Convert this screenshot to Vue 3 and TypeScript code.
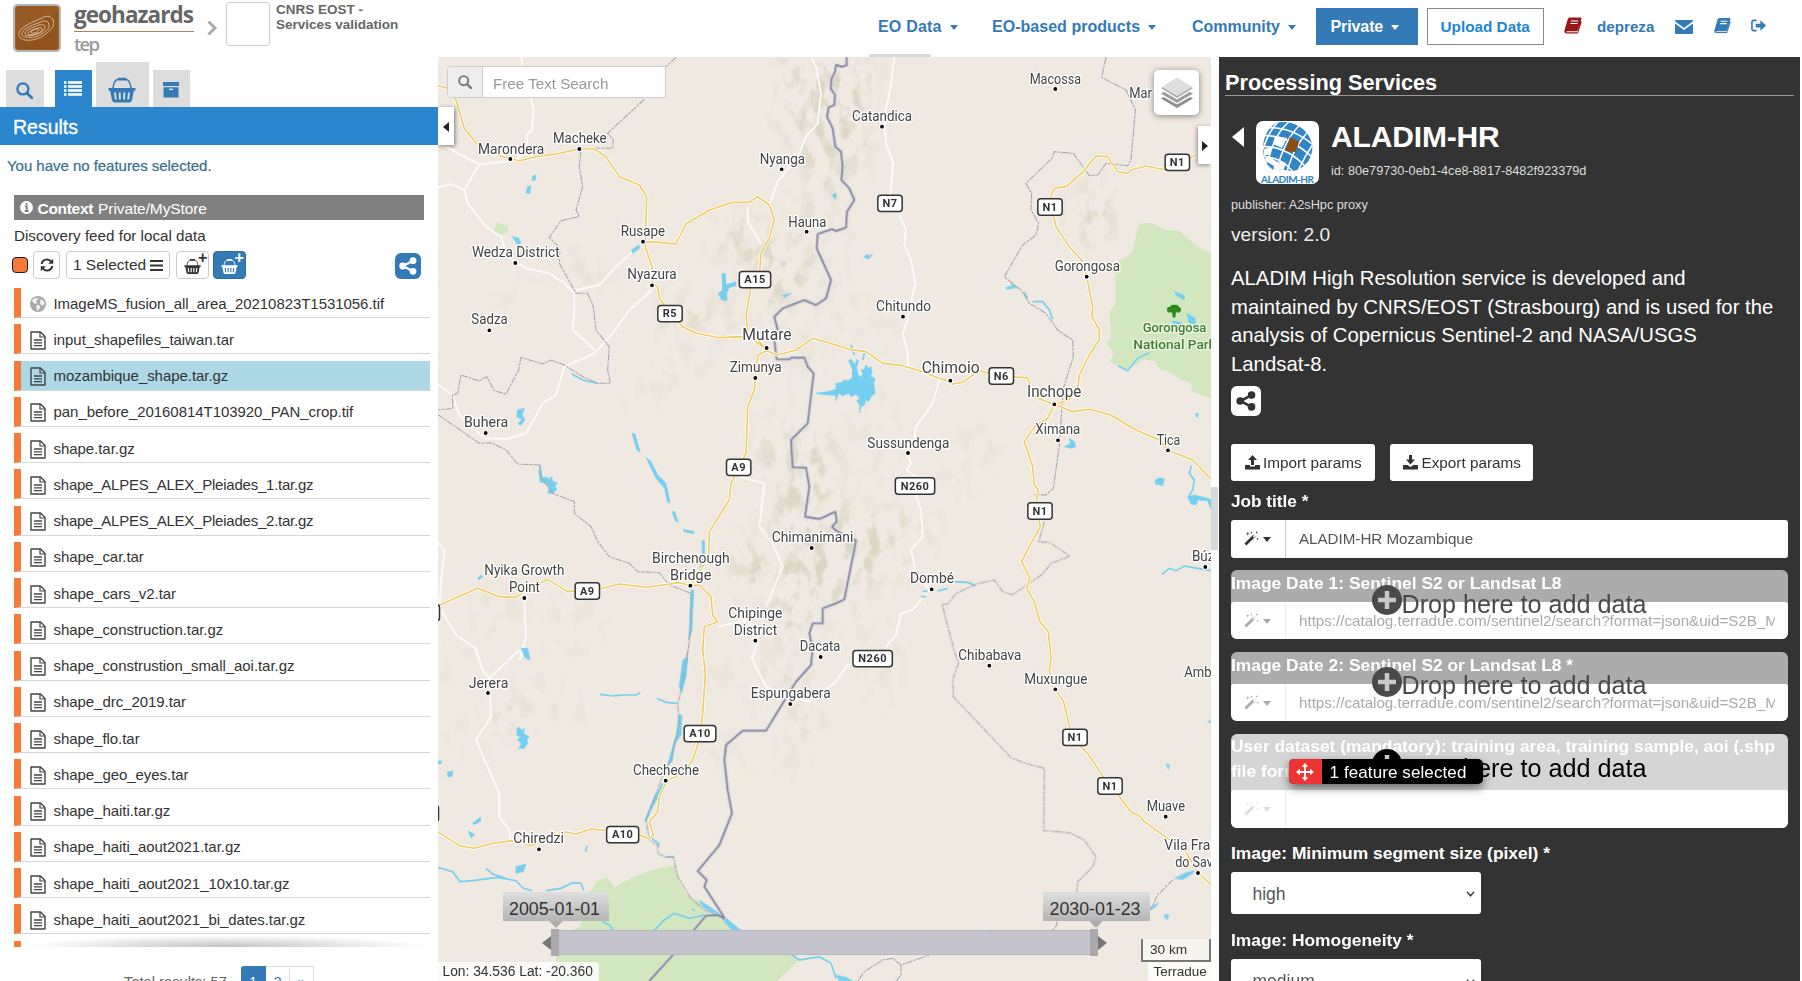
<script setup lang="ts">
type Tile = 'A' | 'B' | 'C' | 'D' | 'E' | 'F'
interface Shape { t: Tile; d: string }
interface Label { t: Tile; s: string; x: number; y: number; w: number; big?: boolean; park?: boolean }
interface Shield { t: Tile; s: string; x: number; y: number; w: number }

// Each map tile has its own origin; tile units are thirds of a pixel.
const origins: Record<Tile, [number, number]> = {
  A: [436, 0], B: [836, 0], C: [436, 330], D: [836, 330], E: [436, 650], F: [836, 650],
}
const place = (t: Tile) => `translate(${origins[t][0]} ${origins[t][1]}) scale(0.33333)`

const files: string[] = [
  'ImageMS_fusion_all_area_20210823T1531056.tif', 'input_shapefiles_taiwan.tar', 'mozambique_shape.tar.gz',
  'pan_before_20160814T103920_PAN_crop.tif', 'shape.tar.gz', 'shape_ALPES_ALEX_Pleiades_1.tar.gz',
  'shape_ALPES_ALEX_Pleiades_2.tar.gz', 'shape_car.tar', 'shape_cars_v2.tar', 'shape_construction.tar.gz',
  'shape_construstion_small_aoi.tar.gz', 'shape_drc_2019.tar', 'shape_flo.tar', 'shape_geo_eyes.tar',
  'shape_haiti.tar.gz', 'shape_haiti_aout2021.tar.gz', 'shape_haiti_aout2021_10x10.tar.gz',
  'shape_haiti_aout2021_bi_dates.tar.gz',
]

const parks: Shape[] = [
  { t: 'B', d: 'M1125 758 L1100 750 L1060 720 L1030 692 L985 690 L945 668 L915 670 L905 685 L887 760 L838 790 L838 910 L820 940 L825 1010 L812 1030 L832 1058 L822 1085 L870 1112 L925 1078 L960 1085 L972 1108 L1000 1115 L1035 1140 L1065 1150 L1068 1175 L1125 1195 Z' },
  { t: 'A', d: 'M172 695 L184 665 L213 678 L218 694 L195 704 Z' },
  { t: 'E', d: 'M390 845 L430 832 L450 790 L465 720 L480 695 L512 682 L538 712 L570 692 L640 662 L718 645 L735 710 L765 745 L790 750 L805 780 L860 800 L885 830 L910 848 L1065 910 L1085 933 L1025 993 L360 993 L360 910 Z' },
]
const hills: Shape[] = [
  { t: 'A', d: 'M1030 172 L1200 172 L1200 560 L1180 620 L1120 680 L1080 660 L1110 600 L1130 560 L1100 500 L1060 420 L1040 300 Z M1000 640 L1060 690 L1110 720 L1160 800 L1120 880 L1040 900 L1000 960 L930 800 L970 720 Z M830 700 L930 650 L980 720 L940 800 L860 760 Z M390 790 L450 750 L500 870 L450 850 Z M240 870 L275 850 L255 900 L220 900 Z M640 910 L880 930 L920 990 L700 990 Z' },
  { t: 'B', d: 'M0 172 L90 172 L115 300 L80 480 L50 560 L0 440 Z M760 540 L815 560 L845 640 L820 700 L780 740 L720 710 L690 630 L730 620 Z M0 800 L40 900 L30 980 L0 960 Z M0 690 L30 740 L0 760 Z M120 940 L160 930 L150 1000 Z' },
  { t: 'C', d: 'M1040 20 L1160 40 L1160 90 L1060 90 Z M980 180 L1060 200 L1050 230 Z M1120 300 L1200 330 L1200 560 L1120 540 L1070 400 Z M960 320 L1060 300 L1070 400 L970 440 Z M1020 440 L1110 430 L1120 560 L1200 580 L1200 820 L1120 850 L1080 960 L960 900 L1000 780 L880 770 L900 650 L1000 620 Z M620 140 L820 60 L780 100 L640 170 Z M120 820 L250 800 L180 890 L130 860 Z M300 850 L480 880 L440 930 L320 890 Z M590 200 L640 230 L600 250 Z' },
  { t: 'D', d: 'M100 0 L140 0 L120 50 Z M100 170 L150 260 L130 420 L90 450 L80 410 L120 340 L95 250 Z M410 330 L480 310 L430 400 L340 500 L320 530 Z M0 490 L60 560 L120 550 L200 560 L300 600 L200 700 L60 780 L0 900 Z M130 870 L160 910 L150 1120 L130 1100 L120 960 Z M240 290 L275 275 L260 300 Z' },
  { t: 'E', d: 'M1000 60 L1100 80 L1160 250 L1070 330 L960 420 L1030 350 L1110 230 L1090 150 L1030 170 L930 130 Z M810 20 L900 60 L820 90 Z M770 270 L900 310 L850 340 Z M10 60 L80 0 L60 60 Z M120 220 L200 150 L300 160 L200 240 Z M20 320 L90 270 L100 310 Z M230 100 L430 180 L360 200 Z' },
]
const waters: Shape[] = [
  { t: 'A', d: 'M290 528 L300 525 L298 540 L288 542 Z M275 560 L285 557 L281 582 L270 578 Z M229 710 L248 714 L255 730 L244 733 Z M587 750 L608 735 L611 745 L590 760 Z M858 820 L868 822 L870 855 L900 845 L898 858 L880 862 L872 880 L873 902 L858 900 L846 880 L860 870 Z M1040 886 L1065 880 L1045 893 Z M1187 585 L1200 580 L1200 597 Z' },
  { t: 'B', d: 'M83 772 L95 763 L100 768 L110 762 L98 777 Z M1016 874 L1046 888 L1044 899 L1020 886 Z M1052 940 L1078 955 L1078 972 L1060 968 Z M1010 962 L1040 970 L1030 990 L1010 975 Z M510 862 L530 858 L535 865 L512 868 Z' },
  { t: 'C', d: 'M588 310 L597 312 L612 365 L603 360 Z M630 382 L645 395 L665 435 L690 460 L702 518 L694 515 L686 475 L660 445 Z M708 545 L716 545 L727 577 L718 572 Z M742 598 L775 605 L773 611 L745 605 Z M798 632 L805 632 L806 675 L799 672 Z M765 780 L773 780 L768 900 L758 930 Z M308 420 L320 445 L332 440 L338 450 L345 440 L352 455 L363 458 L357 470 L363 478 L350 490 L335 490 L340 475 L334 462 L312 455 Z M245 240 L265 235 L258 255 L267 268 L256 285 L246 282 L258 268 L242 260 Z M125 747 L135 735 L140 741 L130 748 Z M256 955 L275 955 L282 990 L268 985 Z M1140 190 L1175 185 L1200 178 L1200 196 L1165 194 Z' },
  { t: 'D', d: 'M0 160 L20 157 L22 150 L35 152 L48 145 L50 120 L38 92 L45 88 L58 105 L62 88 L68 92 L62 112 L66 135 L74 140 L72 155 L80 130 L75 118 L84 120 L90 105 L98 115 L105 110 L108 125 L104 140 L117 145 L113 160 L117 190 L105 200 L98 215 L90 208 L85 225 L76 230 L70 248 L72 225 L62 212 L72 205 L60 193 L46 200 L38 190 L20 197 L8 190 L0 212 Z M685 350 L703 342 L700 325 L715 335 L720 350 L705 355 Z M958 450 L970 443 L985 447 L980 467 L958 462 Z M1077 252 L1087 250 L1085 264 Z M1055 500 L1075 495 L1095 500 L1125 508 L1125 538 L1115 512 L1085 510 L1080 525 L1065 522 Z' },
  { t: 'E', d: 'M740 30 L756 20 L750 80 L737 128 L730 110 Z M728 195 L738 195 L735 255 L718 280 L708 335 L695 345 L710 290 L722 250 Z M243 235 L250 232 L256 242 L265 235 L262 250 L280 262 L272 268 L275 280 L265 295 L248 295 L256 282 L244 268 L254 262 L242 255 Z M240 650 L270 642 L262 665 L240 670 Z M110 520 L133 502 L135 512 L115 524 Z M97 543 L115 553 L105 565 Z M5 333 L18 333 L15 341 L5 341 Z M34 366 L50 364 L48 380 L36 380 Z M790 750 L865 800 L920 845 L895 848 L860 808 L800 770 Z M680 400 L685 412 L650 470 L630 515 L626 512 L655 440 Z' },
  { t: 'F', d: 'M990 342 L1000 344 L998 358 Z M986 793 L998 795 L995 808 L986 804 Z M1015 685 L1050 668 L1075 662 L1070 670 L1040 688 Z M940 775 L968 757 L960 770 L940 782 Z M445 845 L460 840 L475 847 Z M1115 213 L1126 213 L1126 220 Z M0 975 L30 982 L50 993 L10 993 Z' },
]
const rivers: Shape[] = [
  { t: 'B', d: 'M525 852 L545 865 M563 875 L575 895 M590 905 L620 905 L640 930 L650 958' },
  { t: 'C', d: 'M407 132 L440 150 L485 160 M312 405 L318 450 M790 720 L803 675' },
  { t: 'D', d: 'M846 107 L875 122 L905 85 L940 68 M355 755 L400 758 L418 768 M255 800 L270 800 M260 783 L275 785 M305 783 L335 775 M978 733 L1000 715 L1020 722 L1045 708 L1085 715 L1125 722 M1066 407 L1060 430 L1075 450 L1070 480 L1058 500 M45 45 L55 75 M88 62 L80 90' },
  { t: 'E', d: 'M492 133 L530 138 L560 135 L600 135 L613 128 M663 145 L690 157 L725 160 M5 652 L50 665 L72 695 L110 692 L185 682 L240 692 L262 715 L288 722 M150 655 L170 672 L210 685 M330 722 L375 715 L410 698 L435 700 L443 722 M500 815 L520 825 L535 845 M652 845 L685 810 L715 790 L760 805 L810 795 M920 845 L985 846 M1065 912 L1090 930 L1150 920 L1185 940 L1200 985 M640 560 L668 580 L668 590 M690 620 L715 622 M453 588 L448 605 M770 775 L775 783' },
]
const whiteRoads: Shape[] = [
  { t: 'A', d: 'M255 172 L260 195 M285 295 L293 330 L288 390 L272 405 L275 445 L240 480 L130 493 L85 570 L95 610 L150 680 L195 710 L215 770 L270 805 L340 820 L385 850 L415 880 L415 930 L410 990 L445 1020 L475 1050 M5 427 L85 470 L130 493 M5 562 L45 552 L85 570 M1125 172 L1140 200 L1155 280 L1145 370 L1110 410 L1090 460 L1050 515 L1025 545 L1000 615 M935 620 L935 665 L975 730 M590 755 L540 800 L490 855 L420 870 M648 870 L580 930 L530 1000 L475 1060 L385 1100 L360 1185 L320 1210 L270 1300 L215 1317 L145 1315 L70 1245 L50 1185 L5 1153' },
  { t: 'B', d: 'M175 172 L162 270 L145 350 L150 430 L172 490 L162 590 M190 645 L210 690 L205 735 L225 780 L238 850 L225 910 L215 960 L200 1000 L215 1060 L215 1100' },
  { t: 'C', d: 'M5 635 L25 660 L15 760 L10 830 M15 840 L60 915 L120 955 L130 990 M265 810 L270 920 L250 990 M910 440 L985 460 L970 590 L1010 640 L1040 710 L990 830 M845 890 L940 870 L960 950 L950 985' },
  { t: 'D', d: 'M310 150 L290 220 L240 290 L235 330 M216 375 L225 400 L212 420 L240 440 M240 495 L255 540 L260 620 L225 660 L240 730 L280 778 L230 840 L195 850 L180 915 L150 950' },
  { t: 'E', d: 'M120 0 L140 60 L160 85 L250 0 M160 85 L165 200 L120 270 L150 340 L190 430 L190 500 L220 540 L225 580 M945 20 L990 110 L1050 140 L1120 155 L1200 95' },
  { t: 'F', d: 'M0 95 L30 50 L50 40' },
]
const dashed: Shape[] = [
  { t: 'A', d: 'M720 172 L690 200 M625 298 L515 400 L532 420 L530 445 L435 445 L430 500 L440 560 L420 630 L430 650 L375 662 L340 712 L372 745 L370 790 L420 880 L455 880 L472 920 L480 990 L520 1040 L515 1110 L523 1150 L485 1150 L440 1130 L385 1095 L345 1080 L320 1092 L255 1072 L248 1110 L210 1182 L175 1172 L152 1130 L130 1143 L75 1125 L65 1180 L50 1185 L50 1225 L5 1230' },
  { t: 'B', d: 'M810 172 L797 232 L870 270 L898 330 L885 480 L875 497 L810 490 L785 525 L760 527 L712 460 L655 455 L648 475 L570 550 L587 580 L585 630 L608 670 L600 705 L560 735 L505 830 L555 870 L580 910 L630 940 L665 990 L710 1020 L712 1070 L682 1165 L670 1335 L652 1465 L630 1485 L595 1484' },
  { t: 'C', d: 'M5 253 L130 340 L165 338 L210 360 L245 402 L310 405 L315 440 L350 490 L415 515 L415 550 L465 590 L485 635 L520 680 L580 700 L605 725 L670 728 L700 765 L765 790 L765 900 L752 990' },
  { t: 'D', d: 'M625 575 L608 635 L640 637 L702 678 L645 700 L620 732 L530 794 L500 785 L475 750 L420 762 L360 790 L335 822 L318 822 L355 965 L368 998 L350 1050 L352 1100 L525 1283 L570 1300 L625 1315 L623 1502 L700 1508 L745 1530 L780 1580 L770 1610 L725 1655 L722 1690' },
  { t: 'E', d: 'M756 0 L735 120 L725 165 L730 220 L705 330 L680 380 L630 510 L640 570 L665 585 L665 610 L690 622 L712 620 L725 680 L765 745 L805 780 L860 800' },
  { t: 'F', d: 'M663 815 L662 825 L645 847 M293 910 L195 945 L170 925 L140 930 L85 965 L65 993 M195 945 L195 975 L180 993 M1010 690 L965 735 L945 775' },
]
const country: Shape[] = [
  { t: 'A', d: 'M1232 172 L1232 196 L1218 200 L1200 195 L1197 215 L1187 235 L1184 265 L1197 285 L1195 315 L1178 322 L1173 350 L1190 385 L1198 440 L1215 455 L1220 500 L1216 540 L1240 565 L1255 600 L1233 635 L1230 683 L1200 693 L1188 687 L1145 702 L1142 745 L1185 840 L1170 895 L1140 915 L1105 900 L1040 925 L1015 950 L1025 990 L1015 1020 L1022 1078 L1060 1078 L1065 1073 L1105 1073 L1115 1100 L1133 1120 L1115 1270 L1065 1320 L1070 1402 L1110 1403 L1120 1460 L1107 1550 L1150 1557 L1198 1535 L1202 1565 L1188 1580 L1200 1592 L1260 1622 L1225 1798 L1200 1810 L1160 1825 L1160 1870 L1130 1870 L1120 1900 L1130 1945 L1125 1995 L1080 2045 L1040 2110 L990 2192 L920 2192 L870 2235 L865 2280 L875 2370 L888 2440 L850 2535 L785 2613 L812 2640 L805 2660 L860 2745 L865 2755 L845 2745 L810 2747 L770 2795 M715 2860 L640 2943' },
]
const yellow: Shape[] = [
  { t: 'A', d: 'M5 257 L35 265 L60 300 L85 385 L130 440 L200 470 L250 482 L300 470 L360 462 L430 447 L475 447 L510 470 L550 530 L610 555 L632 590 L628 740 L648 800 L650 850 L665 860 L670 895 L690 920 L740 980 L780 1000 L850 1013 L930 1010 L965 1020 L992 1048 M621 725 L670 727 L720 732 L750 672 L820 630 L890 607 L940 607 L965 590 L1000 615 L1015 660 L1000 715 L975 760 L970 830 L945 860 L930 950 L938 1010 L992 1048' },
  { t: 'B', d: 'M1082 463 L1060 475 L990 510 L930 498 L885 510 L875 520 L845 515 L815 470 L780 468 L740 517 L690 560 L655 565 L640 600 L660 680 L700 740 L745 790 L752 830 L770 920 L768 950 L790 990 L790 1020 L760 1065 L730 1125 L725 1170 L700 1200 L655 1213' },
  { t: 'C', d: 'M965 75 L992 62 L1025 75 L1080 60 L1130 25 L1200 45 L1240 58 L1290 65 L1340 100 L1400 107 L1450 122 L1510 145 M965 75 L955 180 L935 230 L930 370 L885 460 L880 510 L820 605 L818 680 L790 725 L765 767 M5 828 L125 775 L190 800 L240 802 L265 785 L335 748 L395 785 L500 775 L550 762 L630 772 L730 758 L765 767 L790 765 L825 800 L830 855 L845 875 L805 890 L800 960 L808 1030 L800 1150 L790 1230 L770 1290 L750 1320 L720 1340 L689 1352' },
  { t: 'D', d: 'M310 145 L343 155 L350 163 L380 157 L430 122 L500 140 L575 143 L590 190 L610 207 L655 223 L710 245 L760 238 L825 255 L900 300 L970 330 L996 361 L1070 390 L1125 447 M655 223 L635 265 L600 285 L565 335 L590 410 L595 465 L607 480 L600 520 L613 590 L580 650 L557 695 L582 745 L572 775 L595 815 L612 875 L637 905 L645 985 L640 1020 L652 1078' },
  { t: 'E', d: 'M5 545 L70 587 L115 595 L170 580 L230 572 L285 587 L340 560 L385 545 L420 552 L465 537 L600 550 L640 567 L652 555 L640 515 L665 485 L670 440 L689 400' },
  { t: 'F', d: 'M658 118 L683 155 L703 240 L735 290 L755 310 L805 385 L850 440 L885 485 L910 497 L925 515 L995 565 L1040 590 L1086 669 L1125 703' },
]
const labels: Label[] = [
  { t: 'A', s: 'Macheke', x: 351, y: 430, w: 161 }, { t: 'A', s: 'Marondera', x: 126, y: 461, w: 199 },
  { t: 'A', s: 'Nyanga', x: 971, y: 492, w: 136 }, { t: 'A', s: 'Hauna', x: 1057, y: 680, w: 114 },
  { t: 'A', s: 'Rusape', x: 554, y: 707, w: 133 }, { t: 'A', s: 'Wedza District', x: 108, y: 771, w: 263 },
  { t: 'A', s: 'Nyazura', x: 574, y: 838, w: 148 }, { t: 'A', s: 'Sadza', x: 106, y: 973, w: 109 },
  { t: 'B', s: 'Macossa', x: 581, y: 252, w: 154 }, { t: 'B', s: 'Mar', x: 880, y: 293, w: 68 },
  { t: 'B', s: 'Catandica', x: 48, y: 362, w: 180 }, { t: 'B', s: 'Gorongosa', x: 656, y: 812, w: 196 },
  { t: 'B', s: 'Chitundo', x: 120, y: 932, w: 165 },
  { t: 'D', s: 'Gorongosa', x: 920, y: 7, w: 191, park: true }, { t: 'D', s: 'National Park', x: 892, y: 56, w: 247, park: true },
  { t: 'C', s: 'Mutare', x: 919, y: 31, w: 148, big: true }, { t: 'C', s: 'Zimunya', x: 881, y: 126, w: 156 },
  { t: 'C', s: 'Buhera', x: 84, y: 290, w: 133 }, { t: 'C', s: 'Chimanimani', x: 1007, y: 636, w: 245 },
  { t: 'C', s: 'Birchenough', x: 648, y: 699, w: 233 }, { t: 'C', s: 'Bridge', x: 702, y: 750, w: 124 },
  { t: 'C', s: 'Nyika Growth', x: 145, y: 735, w: 240 }, { t: 'C', s: 'Point', x: 219, y: 787, w: 93 },
  { t: 'C', s: 'Chipinge', x: 877, y: 864, w: 162 }, { t: 'C', s: 'District', x: 893, y: 915, w: 131 },
  { t: 'C', s: 'Dacata', x: 1091, y: 964, w: 122 },
  { t: 'D', s: 'Chimoio', x: 257, y: 128, w: 174, big: true }, { t: 'D', s: 'Inchope', x: 573, y: 201, w: 163, big: true },
  { t: 'D', s: 'Ximana', x: 598, y: 313, w: 135 }, { t: 'D', s: 'Tica', x: 962, y: 346, w: 71 },
  { t: 'D', s: 'Sussundenga', x: 94, y: 353, w: 246 }, { t: 'D', s: 'Dombé', x: 222, y: 760, w: 132 },
  { t: 'D', s: 'Búzi', x: 1068, y: 694, w: 77 }, { t: 'D', s: 'Chibabava', x: 367, y: 990, w: 189 },
  { t: 'E', s: 'Jerera', x: 98, y: 113, w: 119 }, { t: 'E', s: 'Espungabera', x: 944, y: 145, w: 240 },
  { t: 'E', s: 'Checheche', x: 591, y: 374, w: 198 }, { t: 'E', s: 'Chiredzi', x: 232, y: 580, w: 152 },
  { t: 'F', s: 'Muxungue', x: 565, y: 101, w: 189 }, { t: 'F', s: 'Amb', x: 1045, y: 80, w: 82 },
  { t: 'F', s: 'Muave', x: 932, y: 483, w: 115 }, { t: 'F', s: 'Vila Fra', x: 985, y: 600, w: 138 },
  { t: 'F', s: 'do Save', x: 1018, y: 652, w: 132 },
]
const dots: [Tile, number, number][] = [
  ['A', 430, 447], ['A', 223, 477], ['A', 1037, 508], ['A', 1112, 695], ['A', 621, 725], ['A', 238, 789], ['A', 648, 856], ['A', 160, 991],
  ['B', 658, 267], ['B', 138, 380], ['B', 752, 830], ['B', 201, 950],
  ['C', 992, 54], ['C', 958, 144], ['C', 149, 309], ['C', 1127, 654], ['C', 763, 767], ['C', 265, 804], ['C', 958, 932], ['C', 1154, 981],
  ['D', 343, 152], ['D', 655, 223], ['D', 666, 331], ['D', 996, 361], ['D', 216, 369], ['D', 287, 778], ['D', 1108, 711],
  ['E', 156, 129], ['E', 1063, 162], ['E', 689, 392], ['E', 309, 598],
  ['F', 460, 47], ['F', 658, 118], ['F', 989, 500], ['F', 1086, 669],
]
const shields: Shield[] = [
  { t: 'A', s: 'A15', x: 957, y: 839, w: 94 }, { t: 'A', s: 'R5', x: 702, y: 941, w: 73 },
  { t: 'B', s: 'N1', x: 1024, y: 487, w: 73 }, { t: 'B', s: 'N1', x: 642, y: 621, w: 73 }, { t: 'B', s: 'N7', x: 162, y: 610, w: 73 },
  { t: 'C', s: 'A9', x: 908, y: 412, w: 73 }, { t: 'C', s: 'A9', x: 454, y: 783, w: 73 }, { t: 'C', s: '', x: -26, y: 848, w: 73 },
  { t: 'D', s: 'N6', x: 496, y: 138, w: 73 }, { t: 'D', s: 'N260', x: 237, y: 468, w: 118 }, { t: 'D', s: 'N1', x: 612, y: 543, w: 73 },
  { t: 'E', s: 'A10', x: 792, y: 251, w: 95 }, { t: 'E', s: 'A10', x: 560, y: 554, w: 96 }, { t: 'E', s: '', x: -29, y: 490, w: 73 },
  { t: 'F', s: 'N260', x: 110, y: 26, w: 118 }, { t: 'F', s: 'N1', x: 717, y: 262, w: 73 }, { t: 'F', s: 'N1', x: 822, y: 408, w: 73 },
]
const url = 'https://catalog.terradue.com/sentinel2/search?format=json&uid=S2B_MSIL1C'
const drops = [
  { label: 'Image Date 1: Sentinel S2 or Landsat L8', value: url, cls: 'd1' },
  { label: 'Image Date 2: Sentinel S2 or Landsat L8 *', value: url, cls: 'd2' },
  { label: 'User dataset (mandatory): training area, training sample, aoi (.shp file format) *', value: '', cls: 'd3' },
]
</script>

<template>
  <div class="app">
    <svg class="defs" width="0" height="0">
      <defs>
        <symbol id="file" viewBox="0 0 16 19">
          <path d="M1 1h9.5L15 5.5V18H1z" fill="none" stroke="currentColor" stroke-width="1.4" stroke-linejoin="round" />
          <path d="M10 1v5h5" fill="none" stroke="currentColor" stroke-width="1.2" />
          <path d="M4 9h8M4 11.8h8M4 14.6h8" stroke="currentColor" stroke-width="1.3" />
        </symbol>
        <symbol id="globe" viewBox="0 0 16 16">
          <circle cx="8" cy="8" r="8" fill="#aaa" />
          <path d="M3 3l4-1 1.5 1L6 5l1 2-2 1-3-3zM6.500 9l3 .5 1 1.500-2 3-1 1-1-3zM10.500 3.500l2.500.5 1.500 3-1 2.500-2.500-.5-1-2z" fill="#f3f3f3" />
        </symbol>
        <symbol id="share" viewBox="0 0 18 18">
          <path d="M14 3.700L4 9l10 5.300" fill="none" stroke="currentColor" stroke-width="2.400" />
          <circle cx="14" cy="3.700" r="3.400" fill="currentColor" /><circle cx="3.700" cy="9" r="3.400" fill="currentColor" /><circle cx="14" cy="14.300" r="3.400" fill="currentColor" />
        </symbol>
        <symbol id="basket" viewBox="0 0 28 26">
          <path d="M5 11.500C5.500 6 7.500 2.500 10.500 2.300h7C20.500 2.500 22.500 6 23 11.500" fill="none" stroke="currentColor" stroke-width="1.500" />
          <path d="M10 .8h8v2.700h-8z" fill="currentColor" />
          <path d="M.5 11h27v2.600h-1.600L24 23q-.5 2.500-3 2.500H7Q4.500 25.500 4 23L2.100 13.600H.5z" fill="currentColor" />
          <path d="M7 15.500l.8 7M11.700 15.500l.2 7M16.300 15.500l-.2 7M21 15.500l-.8 7" stroke="var(--gap,#fff)" stroke-width="1.900" />
        </symbol>
        <symbol id="search" viewBox="0 0 16 16">
          <circle cx="6.500" cy="6.500" r="5.200" fill="none" stroke="currentColor" stroke-width="2.200" />
          <path d="M10.300 10.300L15 15" stroke="currentColor" stroke-width="2.600" stroke-linecap="round" />
        </symbol>
        <symbol id="book" viewBox="0 0 18 17">
          <path d="M5.500.5h11q1.200.2.900 1.500L14 13q-.4 1.200-1.600 1.200H3q-1 .3-.7 1H13.500L16.800 4l.9.900L14.300 15.600Q14 16.500 13 16.500H2.500Q.2 16.300.3 14L3.800 2Q4.300.6 5.500.5z" fill="currentColor" />
          <path d="M7 4h7.200M6.400 6.500h7.200" stroke="#fff" stroke-width="1.100" />
        </symbol>
        <symbol id="wand" viewBox="0 0 16 16">
          <path d="M1.500 14.500L11.500 4.500" stroke="currentColor" stroke-width="3" />
          <path d="M9.300 5.500l1.300 1.300 2-2-1.300-1.300z" fill="#fff" />
          <path d="M4 1l.5 1.500L6 3l-1.500.5L4 5l-.5-1.500L2 3l1.500-.5zM8 .5l.4 1 .9.400-.9.400-.4 1-.4-1-.9-.4.900-.4zM13.500 0l.4 1.100 1.100.4-1.100.4-.4 1.100-.4-1.100-1.100-.4 1.100-.4zM14.500 7l.4 1 1 .4-1 .4-.4 1-.4-1-1-.4 1-.4z" fill="currentColor" />
        </symbol>
        <symbol id="chev" viewBox="0 0 10 8"><path d="M1 1.500L5 6l4-4.500" fill="none" stroke="#444" stroke-width="1.600" /></symbol>
      </defs>
    </svg>

    <header class="top">
      <svg class="logo" viewBox="0 0 48 48">
        <rect x="1" y="1" width="46" height="46" rx="4" fill="#985a24" stroke="#b5b5b5" stroke-width="2.200" />
        <path d="M3 45V30L45 8v37z" fill="#8e501b" opacity=".6" />
        <g fill="none" stroke="#e9cdb2" stroke-width=".8">
          <path d="M6 29C8 22 22 17 29 14c5-3 9-2 11 2 2 5-1 9-6 13-7 6-15 8-22 7-4-1-7-3-6-7z" />
          <path d="M9 29c2-5 13-9 19-11 4-2 7-1 8 2 1 4-2 7-6 9-5 4-11 5-16 4-3 0-6-1-5-4z" />
          <path d="M12 29c2-4 9-6 14-8 4-1 6 0 6 2 0 3-4 6-8 7-4 2-13 3-12-1z" />
          <path d="M15 29c2-3 7-4 10-5 3-1 4 0 4 2-1 3-4 3-7 4s-8 1-7-1z" />
          <path d="M18 28c1-2 4-3 6-3 3 0 2 2 0 3s-6 2-6 0z" />
        </g>
      </svg>
      <div class="brand"><span class="geo">geohazards</span><span class="tep">tep</span></div>
      <svg class="crumb" viewBox="0 0 10 16"><path d="M1.500 1.500L8 8l-6.500 6.500" fill="none" stroke="#aaa" stroke-width="3" /></svg>
      <div class="blank"></div>
      <div class="community">CNRS EOST -<br />Services validation</div>
      <nav class="nav">
        <a class="n1">EO Data<i class="caret"></i></a>
        <a class="n2">EO-based products<i class="caret"></i></a>
        <a class="n3">Community<i class="caret"></i></a>
        <a class="private">Private<i class="caret"></i></a>
        <a class="upload">Upload Data</a>
        <svg class="bk red"><use href="#book" /></svg>
        <a class="user">depreza</a>
        <svg class="mail" viewBox="0 0 18 14"><path d="M1 0h16q1 0 1 1.200L9 8 0 1.200Q0 0 1 0zM0 3.500L9 10l9-6.500V13q0 1-1 1H1q-1 0-1-1z" fill="currentColor" /></svg>
        <svg class="bk blue"><use href="#book" /></svg>
        <svg class="out" viewBox="0 0 16 13"><path d="M6 1H3Q1 1 1 3v7q0 2 2 2h3" fill="none" stroke="currentColor" stroke-width="1.700" /><path d="M5 4.500h5V1l6 5.500L10 12V8.500H5z" fill="currentColor" /></svg>
      </nav>
      <div class="underline"></div>
    </header>

    <aside class="left">
      <div class="tabs">
        <div class="tab"><svg class="s17"><use href="#search" /></svg></div>
        <div class="tab active"><svg width="18" height="15" viewBox="0 0 18 15"><path d="M0 1.500h2.500M0 5.500h2.500M0 9.500h2.500M0 13.500h2.500M4 1.500h14M4 5.500h14M4 9.500h14M4 13.500h14" stroke="#fff" stroke-width="2.500" /></svg></div>
        <div class="tab tall"><svg class="bigbasket"><use href="#basket" /></svg></div>
        <div class="tab last"><svg width="16" height="16" viewBox="0 0 16 16"><path d="M0 0h16v4H0zM.5 5.200h15V15.500H.5z" fill="currentColor" /><path d="M6 7.300h4" stroke="#fff" stroke-width="1.200" /></svg></div>
      </div>
      <h2 class="results">Results</h2>
      <p class="none">You have no features selected.</p>
      <div class="context">
        <svg width="13" height="13" viewBox="0 0 12 12"><circle cx="6" cy="6" r="6" fill="#fff" /><path d="M4.600 5h1.700v4.200M4.300 9.300h3.600M5.200 2.900h1.700" stroke="#777" stroke-width="1.500" fill="none" /></svg>
        <b>Context</b><span>Private/MyStore</span>
      </div>
      <p class="disc">Discovery feed for local data</p>
      <div class="tools">
        <i class="swatch"></i>
        <span class="btn refresh"><svg width="14" height="14" viewBox="0 0 14 14"><path d="M1.700 6A5.200 5.200 0 0 1 11 3.500M12.300 8A5.200 5.200 0 0 1 3 10.500" fill="none" stroke="#333" stroke-width="2" /><path d="M13.200.7V5.700H8.200zM.8 13.300V8.300h5z" fill="#333" /></svg></span>
        <span class="btn selected">1 Selected<svg width="13" height="11" viewBox="0 0 13 11"><path d="M0 1h13M0 5.500h13M0 10h13" stroke="#333" stroke-width="1.800" /></svg></span>
        <span class="btn bsk"><svg class="mini"><use href="#basket" /></svg><b>+</b></span>
        <span class="btn bsk on"><svg class="mini"><use href="#basket" /></svg><b>+</b></span>
        <span class="shareblue"><svg><use href="#share" /></svg></span>
      </div>
      <div class="list">
        <div v-for="(f, i) in files" :key="f" class="row" :class="{ hit: i === 2, caps: f.includes('ALPES') }">
          <svg v-if="i === 0" class="gl"><use href="#globe" /></svg>
          <svg v-else class="fi"><use href="#file" /></svg>
          <span>{{ f }}</span>
        </div>
        <div class="row stub"></div>
      </div>
      <div class="pager"><span class="total">Total results: 57</span><a class="on">1</a><a>2</a><a>»</a></div>
    </aside>

    <main class="map">
      <svg class="canvas" viewBox="438 57 773 924">
        <defs>
          <filter id="relief" x="0" y="0" width="100%" height="100%" color-interpolation-filters="sRGB">
            <feGaussianBlur in="SourceAlpha" stdDeviation="14" result="soft" />
            <feTurbulence type="fractalNoise" baseFrequency="0.075 0.045" numOctaves="3" seed="8" />
            <feColorMatrix values="0 0 0 0 0.80  0 0 0 0 0.78  0 0 0 0 0.68  5 0 0 0 -2.400" result="n" />
            <feComposite in="n" in2="soft" operator="in" />
          </filter>
        </defs>
        <rect x="438" y="57" width="773" height="924" fill="#f0e9e1" />
        <g v-for="(p, i) in parks" :key="'p' + i" :transform="place(p.t)"><path :d="p.d" fill="#d2e7c0" /></g>
        <g filter="url(#relief)" opacity=".55"><g v-for="(p, i) in hills" :key="'h' + i" :transform="place(p.t)"><path :d="p.d" fill="#000" /></g></g>
        <g v-for="(p, i) in whiteRoads" :key="'r' + i" :transform="place(p.t)"><path :d="p.d" class="white" /></g>
        <g v-for="(p, i) in waters" :key="'w' + i" :transform="place(p.t)"><path :d="p.d" fill="#75cff0" stroke="#75cff0" stroke-width="2" /></g>
        <g v-for="(p, i) in rivers" :key="'v' + i" :transform="place(p.t)"><path :d="p.d" class="river" /></g>
        <g v-for="(p, i) in dashed" :key="'d' + i" :transform="place(p.t)"><path :d="p.d" class="dash" /></g>
        <g v-for="(p, i) in country" :key="'c' + i" :transform="place(p.t)"><path :d="p.d" class="halo" /><path :d="p.d" class="country" /></g>
        <g v-for="(p, i) in yellow" :key="'y' + i" :transform="place(p.t)"><path :d="p.d" class="casing" /><path :d="p.d" class="yellow" /></g>
        <g v-for="(d, i) in dots" :key="'o' + i" :transform="place(d[0])"><circle :cx="d[1]" :cy="d[2]" r="7.500" fill="#000" stroke="#fff" stroke-width="3.500" /></g>
        <g v-for="(l, i) in labels" :key="'l' + i" :transform="place(l.t)">
          <text :x="l.x" :y="l.y" :textLength="l.w" lengthAdjust="spacingAndGlyphs" class="lab" :class="{ big: l.big, park: l.park }">{{ l.s }}</text>
        </g>
        <g v-for="(s, i) in shields" :key="'s' + i" :transform="place(s.t)">
          <rect :x="s.x - s.w / 2" :y="s.y - 24.500" :width="s.w" height="49" rx="9" fill="#fff" stroke="#333" stroke-width="4.500" />
          <text :x="s.x" :y="s.y + 11.500" class="shield">{{ s.s }}</text>
        </g>
        <g transform="translate(1174 311)"><path d="M0-6c3-1 5 1 5 2 2 0 3 3 1 5-1 1-3 1-4 0L1.300 6.500h-2.600L-2 1c-2 1-5 1-5-2s1-3 3-3c0-1 2-3 4-2z" fill="#2f8a1d" /></g>
      </svg>
      <div class="search"><span class="ic"><svg class="s14"><use href="#search" /></svg></span><span class="ph">Free Text Search</span></div>
      <div class="fold lf"><i></i></div>
      <div class="fold rt"><i></i></div>
      <div class="layers">
        <svg width="34" height="34" viewBox="0 0 34 34">
          <path d="M17 14L33 22.500 17 32 1 22.500z" fill="#8e8e8e" /><path d="M17 11L33 19.500 17 28.500 1 19.500z" fill="#fff" />
          <path d="M17 9L33 17.500 17 27 1 17.500z" fill="#9c9c9c" /><path d="M17 6L33 14 17 23.500 1 14z" fill="#fff" />
          <path d="M17 2L33 12 17 22 1 12z" fill="#a9a9a9" /><path d="M17 2L32 11 17 20 2 11z" fill="#dedede" />
        </svg>
      </div>
      <div class="slider"><i class="arr al"></i><i class="grip"></i><i class="track"></i><i class="grip"></i><i class="arr ar"></i></div>
      <div class="date dl">2005-01-01</div>
      <div class="date dr">2030-01-23</div>
      <div class="lonlat">Lon: 34.536 Lat: -20.360</div>
      <div class="scale">30 km</div>
      <div class="attr">Terradue</div>
    </main>

    <div class="split"><i></i></div>

    <aside class="right">
      <h3 class="ps">Processing Services</h3>
      <div class="svc">
        <i class="back"></i>
        <svg class="svcicon" viewBox="0 0 63 63">
          <rect width="63" height="63" rx="7" fill="#fff" />
          <clipPath id="gc"><path d="M20 2C34-2 52 6 56 23c2 14-8 26-20 27l-22-3C4 36 4 12 20 2z" /></clipPath>
          <g clip-path="url(#gc)">
            <rect width="63" height="55" fill="#3185c6" />
            <g fill="none" stroke="#fff" stroke-width="1.600">
              <path d="M10 7q24-2 46 16M4 15q26-3 52 21M4 26q24-3 46 20M4 36q20-2 34 16" />
              <path d="M34 0Q16 14 10 50M45 3Q28 18 20 52M53 10Q38 24 30 54M59 20Q48 36 40 54M23 0Q12 10 5 34" />
            </g>
            <path d="M19 15l12 2-5 10-9-4zM8 28l8-2-2 7-6 2zM6 41l6-6 11 7-4 10-14-2zM25 40l5 2-3 9h-9z" fill="#fff" />
            <path d="M34 16l9 5-3 10-11-1z" fill="#8c4d14" />
          </g>
          <path d="M11 41l7 4-1 4-6-6z" fill="#3185c6" />
          <text x="31.500" y="61.500" text-anchor="middle" class="svct" textLength="53">ALADIM-HR</text>
        </svg>
        <div class="svcname"><h1>ALADIM-HR</h1><small>id: 80e79730-0eb1-4ce8-8817-8482f923379d</small></div>
      </div>
      <p class="pub">publisher: A2sHpc proxy</p>
      <p class="ver">version: 2.0</p>
      <p class="desc">ALADIM High Resolution service is developed and<br />maintained by CNRS/EOST (Strasbourg) and is used for the<br />analysis of Copernicus Sentinel-2 and NASA/USGS<br />Landsat-8.</p>
      <span class="sharebox"><svg><use href="#share" /></svg></span>
      <div class="btns">
        <span class="pbtn"><svg width="15" height="15" viewBox="0 0 15 15"><path d="M7.500 0L12 5H9v5H6V5H3z" fill="#333" /><path d="M0 10h5v1.500h5V10h5v4.500H0z" fill="#333" /></svg><span>Import params</span></span>
        <span class="pbtn"><svg width="15" height="15" viewBox="0 0 15 15"><path d="M7.500 9.500L12 4.500H9V0H6v4.500H3z" fill="#333" /><path d="M0 10h4.500l3 2 3-2H15v4.500H0z" fill="#333" /></svg><span>Export params</span></span>
      </div>
      <label class="jt">Job title *</label>
      <div class="field"><span class="addon"><svg class="wd"><use href="#wand" /></svg><i class="caret"></i></span><span class="val">ALADIM-HR Mozambique</span></div>
      <div v-for="d in drops" :key="d.cls" class="drop" :class="d.cls">
        <label>{{ d.label }}</label>
        <div class="field"><span class="addon"><svg class="wd"><use href="#wand" /></svg><i class="caret"></i></span><span class="val"><em>{{ d.value }}</em></span></div>
        <div class="veil"><svg width="30" height="30" viewBox="0 0 30 30"><circle cx="15" cy="15" r="15" fill="currentColor" /><path d="M15 6v18M6 15h18" :stroke="d.cls === 'd3' ? '#d5d5d5' : '#c8c8c8'" stroke-width="4.500" /></svg><span>Drop here to add data</span></div>
      </div>
      <div class="drag"><span class="mv"><svg width="18" height="18" viewBox="0 0 18 18"><path d="M9 2v14M2 9h14" stroke="#fff" stroke-width="1.800" /><path d="M9 0l3.200 3.800H5.800zM9 18l3.200-3.800H5.800zM0 9l3.800-3.200v6.400zM18 9l-3.800-3.200v6.400z" fill="#fff" /></svg></span><span class="tx">1 feature selected</span></div>
      <label class="seg">Image: Minimum segment size (pixel) *</label>
      <div class="select">high<svg><use href="#chev" /></svg></div>
      <label class="hom">Image: Homogeneity *</label>
      <div class="select">medium<svg><use href="#chev" /></svg></div>
    </aside>
  </div>
</template>

<style>
html, body { margin: 0; overflow: hidden; }
</style>

<style scoped>
* { box-sizing: border-box; }
.app { width: 1802px; height: 981px; display: grid; grid-template: 57px 924px / 438px 773px 7.500px 581.500px; overflow: hidden; position: relative; background: #fff; font-family: "Liberation Sans", Arial, sans-serif; font-size: 16px; color: #333; }
.defs { position: absolute; }
p, h1, h2, h3 { margin: 0; font-weight: 400; }
label { display: block; font-weight: 700; }
svg { display: block; flex: none; }
span, a, p, label, h1, h2, h3, small { white-space: nowrap; }

.top { grid-column: 1 / -1; display: flex; align-items: flex-start; position: relative; background: #fff; }
.logo { width: 48px; height: 48px; margin: 4px 0 0 13px; }
.brand { width: 120px; margin-left: 13px; display: flex; flex-direction: column; font-family: "Open Sans", sans-serif; }
.geo { height: 32px; line-height: 29px; font-size: 22.500px; font-weight: 700; color: #666; border-bottom: 1.500px solid #b98058; letter-spacing: -.95px; }
.tep { height: 25px; line-height: 23px; font-size: 18.500px; color: #999; font-weight: 600; letter-spacing: -1.800px; }
.crumb { width: 10px; height: 16px; margin: 20px 0 0 13px; }
.blank { width: 44px; height: 44px; margin: 2px 0 0 9px; border: 1px solid #ccc; border-radius: 4px; }
.community { width: 220px; margin: 2px 0 0 6px; font-size: 13.500px; line-height: 15.300px; font-weight: 700; color: #666; white-space: nowrap; }
.nav { display: flex; align-items: center; height: 38px; margin: 7px 0 0 382px; padding-top: 1px; color: #337ab7; font-weight: 700; font-size: 16px; }
.nav a { display: flex; align-items: center; }
.caret { display: inline-block; width: 0; height: 0; border: 4.500px solid transparent; border-top: 5px solid currentColor; border-bottom: 0; margin-left: 8px; margin-top: 2px; }
.n1 { width: 114px; letter-spacing: .2px; }
.n2 { width: 200px; letter-spacing: .03px; }
.n3 { width: 123.500px; }
.private { width: 102px; height: 37.500px; background: #337ab7; color: #fff; padding-left: 15px; margin-right: 9.500px; letter-spacing: -.1px; }
.upload { width: 116.500px; height: 37.500px; border: 1.500px solid #888; padding-left: 12.500px; color: #1e87d0; font-size: 15.300px; margin-right: 20.500px; }
.bk { width: 18px; height: 17px; margin-top: -2px; }
.red { color: #9b1616; margin-right: 15px; }
.user { width: 78px; font-size: 15.200px; }
.mail { width: 18px; height: 14px; margin-right: 21px; }
.blue { width: 17px; margin-right: 20px; }
.out { width: 15px; height: 13px; margin-top: -2px; }
.underline { position: absolute; left: 869px; top: 54px; width: 62px; height: 3px; background: #d9d9d9; }

.left { background: #fff; overflow: hidden; color: #333; }
.tabs { height: 50px; padding-left: 6px; display: flex; align-items: flex-end; color: #337ab7; }
.tab { width: 37.500px; height: 37px; background: #ddd; display: flex; align-items: center; justify-content: center; margin-right: 11px; --gap: #ddd; }
.tab.active { background: #2c86cd; margin-right: 4px; }
.tab.tall { width: 52.500px; height: 45px; margin-right: 4px; padding-top: 10px; }
.tab.last { padding-top: 2px; }
.s17 { width: 17px; height: 17px; margin-top: 3px; }
.bigbasket { width: 28px; height: 26px; }
.results { width: 437.500px; height: 38px; line-height: 41.500px; padding-left: 13px; font-size: 19.500px; background: #2c86cd; color: #fff; -webkit-text-stroke: .3px #fff; }
.none { height: 50px; line-height: 42px; padding-left: 7px; font-size: 15px; letter-spacing: -.03px; color: #31708f; -webkit-text-stroke: .2px; }
.context { width: 410px; height: 25px; margin-left: 14px; padding-left: 6px; background: #808080; color: #fff; display: flex; align-items: center; font-size: 15.500px; }
.context b { margin: 2px 5px 0 4.500px; letter-spacing: -.3px; }
.context span { margin-top: 2px; letter-spacing: -.1px; }
.disc { height: 31px; line-height: 31px; padding-left: 14px; font-size: 15.200px; }
.tools { height: 37px; padding-left: 12px; display: flex; align-items: flex-start; }
.swatch { width: 16px; height: 16px; margin: 6px 5px 0 0; border: 1.500px solid #222; border-radius: 4px; background: #f47b3a; }
.btn { height: 27.500px; border: 1px solid #ccc; border-radius: 4px; display: flex; align-items: center; justify-content: center; }
.refresh { width: 27px; margin-right: 6px; }
.selected { width: 104px; margin-right: 6px; font-size: 15.500px; gap: 4px; padding-top: 1px; }
.bsk { width: 33px; margin-right: 3.500px; position: relative; justify-content: flex-start; padding-left: 7px; }
.bsk b { position: absolute; left: 21px; top: -5px; font-size: 16px; line-height: 22px; }
.mini { width: 17px; height: 17px; margin-top: 3px; }
.bsk.on { background: #337ab7; border-color: #2e6da4; color: #fff; --gap: #337ab7; }
.shareblue { width: 26px; height: 26px; margin: 1.500px 0 0 146px; background: #337ab7; border-radius: 6px; color: #fff; display: grid; place-items: center; }
.shareblue svg { width: 18px; height: 18px; }
.list { height: 659px; padding-left: 14px; display: flex; flex-direction: column; gap: 6.250px; overflow: hidden; position: relative; }
.row { flex: none; height: 30px; width: 416px; border-left: 7.500px solid #f47b3a; border-bottom: 1.500px solid #d8d8d8; padding-left: 8.500px; display: flex; align-items: center; font-size: 15px; color: #333; letter-spacing: -.05px; }
.row span { margin-left: 8px; padding-top: 1px; }
.row.caps { letter-spacing: -.23px; }
.row.hit { background: #add8e6; }
.row.stub { border-bottom: 0; }
.list::after { content: ""; position: absolute; left: 22px; bottom: 0; width: 408px; height: 12px; background: radial-gradient(ellipse at 50% 100%, rgba(0,0,0,.24), rgba(0,0,0,0) 70%); }
.fi { width: 16px; height: 19px; margin-top: 3px; color: #444; }
.gl { width: 16px; height: 16px; margin-top: 3px; }
.pager { margin: 19px 0 0 124px; height: 40px; display: flex; align-items: flex-start; font-size: 14.700px; line-height: 33px; color: #666; }
.total { width: 117px; }
.pager a { width: 24px; height: 38px; border: 1px solid #ddd; border-left: 0; color: #337ab7; text-align: center; line-height: 30px; }
.pager a.on { width: 25px; background: #337ab7; border-color: #337ab7; color: #fff; border-radius: 3px 0 0 0; }

.map { position: relative; overflow: hidden; }
.canvas { width: 773px; height: 924px; }
.white { fill: none; stroke: #fdfbf9; stroke-width: 5.500; stroke-linejoin: round; }
.river { fill: none; stroke: #75cff0; stroke-width: 5; }
.dash { fill: none; stroke: #a6a6ae; stroke-width: 3.200; stroke-dasharray: 20 3 8 3; }
.halo { fill: none; stroke: #dcd9e4; stroke-width: 12; stroke-linejoin: round; opacity: .7; }
.country { fill: none; stroke: #7c8099; stroke-width: 5; stroke-linejoin: round; }
.casing { fill: none; stroke: #fff; stroke-width: 9.500; stroke-linejoin: round; }
.yellow { fill: none; stroke: #efcb62; stroke-width: 4.800; stroke-linejoin: round; }
.lab { font-family: Roboto, sans-serif; font-size: 42px; fill: #444; paint-order: stroke; stroke: #fff; stroke-width: 8px; stroke-linejoin: round; }
.lab.big { font-size: 47px; }
.lab.park { fill: #3c8130; font-weight: 500; font-size: 40px; stroke: #eef5e6; }
.shield { font-family: Roboto, sans-serif; font-size: 33px; font-weight: 700; fill: #333; text-anchor: middle; letter-spacing: 1.500px; }
.search { position: absolute; left: 8.500px; top: 9px; width: 219.500px; height: 32px; display: flex; border: 1px solid #ccc; border-radius: 4px 0 0 4px; background: #fff; }
.ic { width: 35px; background: #eee; border-right: 1px solid #ccc; border-radius: 3px 0 0 3px; display: grid; place-items: center; color: #777; }
.s14 { width: 14px; height: 14px; }
.ph { padding-left: 10.500px; line-height: 33px; font-size: 15.200px; color: #999; }
.fold { position: absolute; background: #fff; box-shadow: 1px 1px 4px rgba(0,0,0,.5); display: grid; place-items: center; }
.fold.lf { left: 0; top: 50px; width: 16px; height: 38px; padding-top: 2px; }
.fold.rt { right: 0; top: 69px; width: 13px; height: 37.500px; padding-top: 2px; box-shadow: -1px 1px 4px rgba(0,0,0,.4); }
.fold i { border: 5.500px solid transparent; }
.lf i { border-right: 6px solid #222; border-left: 0; }
.rt i { border-left: 6px solid #222; border-right: 0; }
.layers { position: absolute; left: 716px; top: 13px; width: 45px; height: 45px; background: #fff; border-radius: 5px; box-shadow: 0 1px 6px rgba(0,0,0,.45); display: grid; place-items: center; }
.slider { position: absolute; left: 104px; top: 872px; height: 27px; display: flex; align-items: center; }
.grip { width: 8px; height: 27px; background: #aca9ac; }
.track { width: 531px; height: 25px; background: #c5c4cf; border: 1.500px solid #b9b6c4; border-width: 1.500px 0; }
.arr { border: 7.500px solid transparent; }
.al { border-left: 0; border-right: 9px solid #777; }
.ar { border-right: 0; border-left: 9px solid #777; }
.date { position: absolute; top: 835px; width: 106px; height: 29px; line-height: 34px; text-align: center; font-size: 17.800px; color: #333; background: linear-gradient(#dfdfdf, #b4b4b4); padding-right: 3px; }
.date::after { content: ""; position: absolute; left: 46px; top: 29px; border: 7px solid transparent; border-top-color: #adadad; border-bottom: 0; }
.dl { left: 65px; }
.dr { left: 605px; width: 107px; }
.lonlat { position: absolute; left: 0; top: 905px; width: 161px; height: 19px; line-height: 19px; padding-left: 4.500px; background: rgba(255,255,255,.8); font-size: 13.800px; border-radius: 0 4px 0 0; white-space: nowrap; }
.scale { position: absolute; left: 703px; top: 882px; width: 70px; height: 22.500px; border: 2px solid #777; border-top: 0; background: rgba(255,255,255,.5); padding-left: 7px; font-size: 13.700px; line-height: 21px; }
.attr { position: absolute; left: 710px; top: 905px; width: 63px; height: 19px; padding-left: 5.500px; background: rgba(255,255,255,.8); font-size: 13.500px; line-height: 19px; }

.split { background: #fff; }
.split i { display: block; height: 63px; width: 7px; margin-top: 430px; background: #d6d9da; }

.right { background: #333; color: #fff; overflow: hidden; position: relative; padding-left: 12.500px; }
.ps { width: 568.500px; height: 39px; margin-left: -6px; line-height: 52px; font-size: 21.700px; font-weight: 700; border-bottom: 1.500px solid #999; }
.svc { display: flex; height: 63px; margin-top: 25px; }
.back { margin: 6px 12px 0 1px; width: 0; height: 0; border: 10px solid transparent; border-right: 12px solid #fff; border-left: 0; }
.svcicon { width: 63px; height: 63px; }
.svct { font: 700 10px Lato, sans-serif; fill: #2f7fc0; }
.svcname { margin-left: 12px; display: flex; flex-direction: column; }
.svcname h1 { height: 46px; line-height: 31px; font-size: 30px; font-weight: 700; letter-spacing: -.15px; }
.svcname small { line-height: 25px; font-size: 12.700px; color: #ddd; }
.pub { height: 26px; line-height: 43px; font-size: 12.700px; color: #ddd; }
.ver { height: 54px; line-height: 49px; font-size: 19.200px; color: #eee; }
.desc { height: 122px; line-height: 28.700px; font-size: 20.300px; margin-top: 0; letter-spacing: .03px; }
.sharebox { width: 30px; height: 30px; background: #fff; color: #333; border-radius: 6px; display: grid; place-items: center; }
.sharebox svg { width: 20px; height: 20px; }
.btns { display: flex; gap: 15px; margin-top: 27.500px; }
.pbtn { width: 143.500px; height: 37.500px; background: #fff; border-radius: 3px; color: #333; display: flex; align-items: center; padding-left: 13.500px; gap: 3.500px; font-size: 15.300px; }
.pbtn span { padding-top: 2px; }
.jt { height: 39px; line-height: 41px; font-size: 17.200px; }
.field { width: 556.500px; height: 37.500px; background: #fff; border-radius: 3px; display: flex; color: #333; }
.addon { width: 55px; border-right: 1px solid #ccc; display: flex; align-items: center; padding-left: 13px; }
.addon .caret { margin-left: 4px; border-width: 5px 4.500px 0; }
.wd { width: 15px; height: 15px; }
.val { flex: 1; margin: 0 13px; overflow: hidden; line-height: 37px; font-size: 15.150px; color: #555; }
.val em { font-style: normal; }
.drop { width: 556.500px; background: #acacac; border-radius: 6px; position: relative; overflow: hidden; }
.drop label { line-height: 24.500px; white-space: normal; font-size: 17.400px; color: #fff; }
.drop .field { position: relative; }
.drop .field .addon { color: #aaa; border-color: #eee; }
.drop .val { color: #aaa; }
.d1 { height: 68.500px; margin-top: 12.500px; }
.d2 { height: 69.500px; margin-top: 13px; }
.d3 { height: 93.500px; margin-top: 13px; background: #d5d5d5; }
.d1 label { height: 31.500px; }
.d2 label { height: 32.500px; }
.d2 .field { height: 37px; }
.d3 label { height: 56px; padding-top: 0; }
.d3 .field .addon { color: #ddd; }
.d1 label, .d2 label { padding-top: 1px; }
.veil { position: absolute; left: 140.500px; top: 15px; display: flex; align-items: center; height: 30px; color: #4a4a4a; font-size: 25.200px; }
.veil span { padding-top: 8px; }
.d3 .veil { color: #000; top: 15px; }
.drag { position: absolute; left: 70px; top: 702px; width: 194px; height: 25px; display: flex; background: #000; border-radius: 5px; overflow: hidden; box-shadow: 0 4px 10px rgba(0,0,0,.5); font-size: 17px; color: #fff; }
.mv { width: 33px; background: #ee3333; display: grid; place-items: center; }
.tx { padding-left: 8px; line-height: 28px; letter-spacing: .1px; }
.seg { height: 44px; line-height: 50px; font-size: 17.400px; }
.hom { height: 45.500px; line-height: 53px; font-size: 17.400px; }
.select { width: 249.500px; height: 42px; background: #fff; border-radius: 3px; color: #555; padding: 3px 6px 0 21.500px; display: flex; align-items: center; justify-content: space-between; font-size: 17.500px; }
.select svg { width: 9px; height: 8px; }
</style>
